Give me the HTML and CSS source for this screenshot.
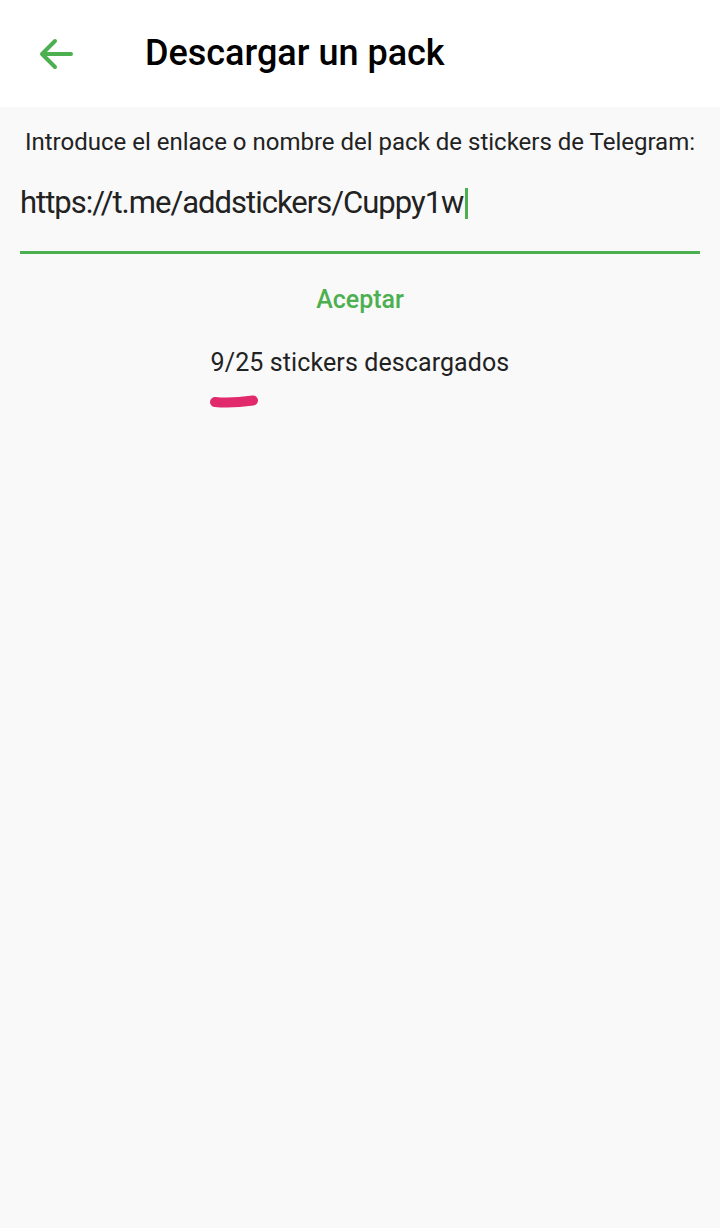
FILE: index.html
```html
<!DOCTYPE html>
<html lang="es">
  <head>
    <meta charset="UTF-8" />
    <meta name="viewport" content="width=device-width, initial-scale=1.0" />
    <title>Descargar un pack</title>
    <link rel="stylesheet" href="styles.css">
  </head>
  <body>
    <header class="appbar">
      <button class="back" aria-label="Volver">
        <svg width="34" height="32" viewBox="0 0 34 32">
          <path d="M32 16H4M16 3L3 16l13 13" fill="none" stroke="#4caf50" stroke-width="4" stroke-linecap="round" stroke-linejoin="round" />
        </svg>
      </button>
      <h1 class="title">Descargar un pack</h1>
    </header>

    <main class="content">
      <p class="hint">Introduce el enlace o nombre del pack de stickers de Telegram:</p>

      <div class="field">
        <span class="value">https://t.me/addstickers/Cuppy1w</span><span class="caret"></span>
      </div>

      <button class="accept">Aceptar</button>

      <div class="status">
        <span class="count">9/25 stickers descargados</span>
        <!-- marker drawn over the screenshot -->
        <svg class="mark" width="54" height="16" viewBox="0 0 54 16">
          <path d="M6 9C16 10 30 9.5 44 7.5" fill="none" stroke="#e02a6c" stroke-width="10" stroke-linecap="round" />
        </svg>
      </div>
    </main>
  </body>
</html>
```

FILE: styles.css
```css
body {
  margin: 0;
  background: #f9f9f9;
  font-family: Roboto, "Noto Sans", sans-serif;
  color: #222;
}
.appbar {
  display: flex;
  align-items: center;
  height: 107px;
  background: #fff;
}
.back {
  display: flex;
  margin-left: 39px;
  padding: 0;
  border: 0;
  background: none;
}
.title {
  margin: 0 0 2px 72px;
  font-size: 36px;
  font-weight: 500;
  color: #000;
}
.content {
  display: flex;
  flex-direction: column;
  align-items: center;
  padding: 0 20px;
}
.hint {
  height: 28px;
  margin: 21px 0 0;
  font-size: 24px;
  line-height: 28px;
  color: #222;
}
.field {
  display: flex;
  align-items: flex-start;
  align-self: stretch;
  height: 66px;
  padding-top: 29px;
  border-bottom: 3px solid #4caf50;
}
.value {
  font-size: 31px;
  line-height: 36px;
  letter-spacing: -1px;
}
.caret {
  width: 3px;
  height: 31px;
  margin: 3px 0 0 2px;
  background: #4caf50;
}
.accept {
  margin-top: 31px;
  padding: 0;
  border: 0;
  background: none;
  font-family: inherit;
  font-size: 25px;
  line-height: 29px;
  font-weight: 500;
  color: #4caf50;
}
.status {
  display: flex;
  flex-direction: column;
  align-items: flex-start;
  margin-top: 34px;
}
.count {
  font-size: 25px;
  line-height: 29px;
  letter-spacing: 0.1px;
}
.mark {
  margin: 16px 0 0 -2px;
}
```
